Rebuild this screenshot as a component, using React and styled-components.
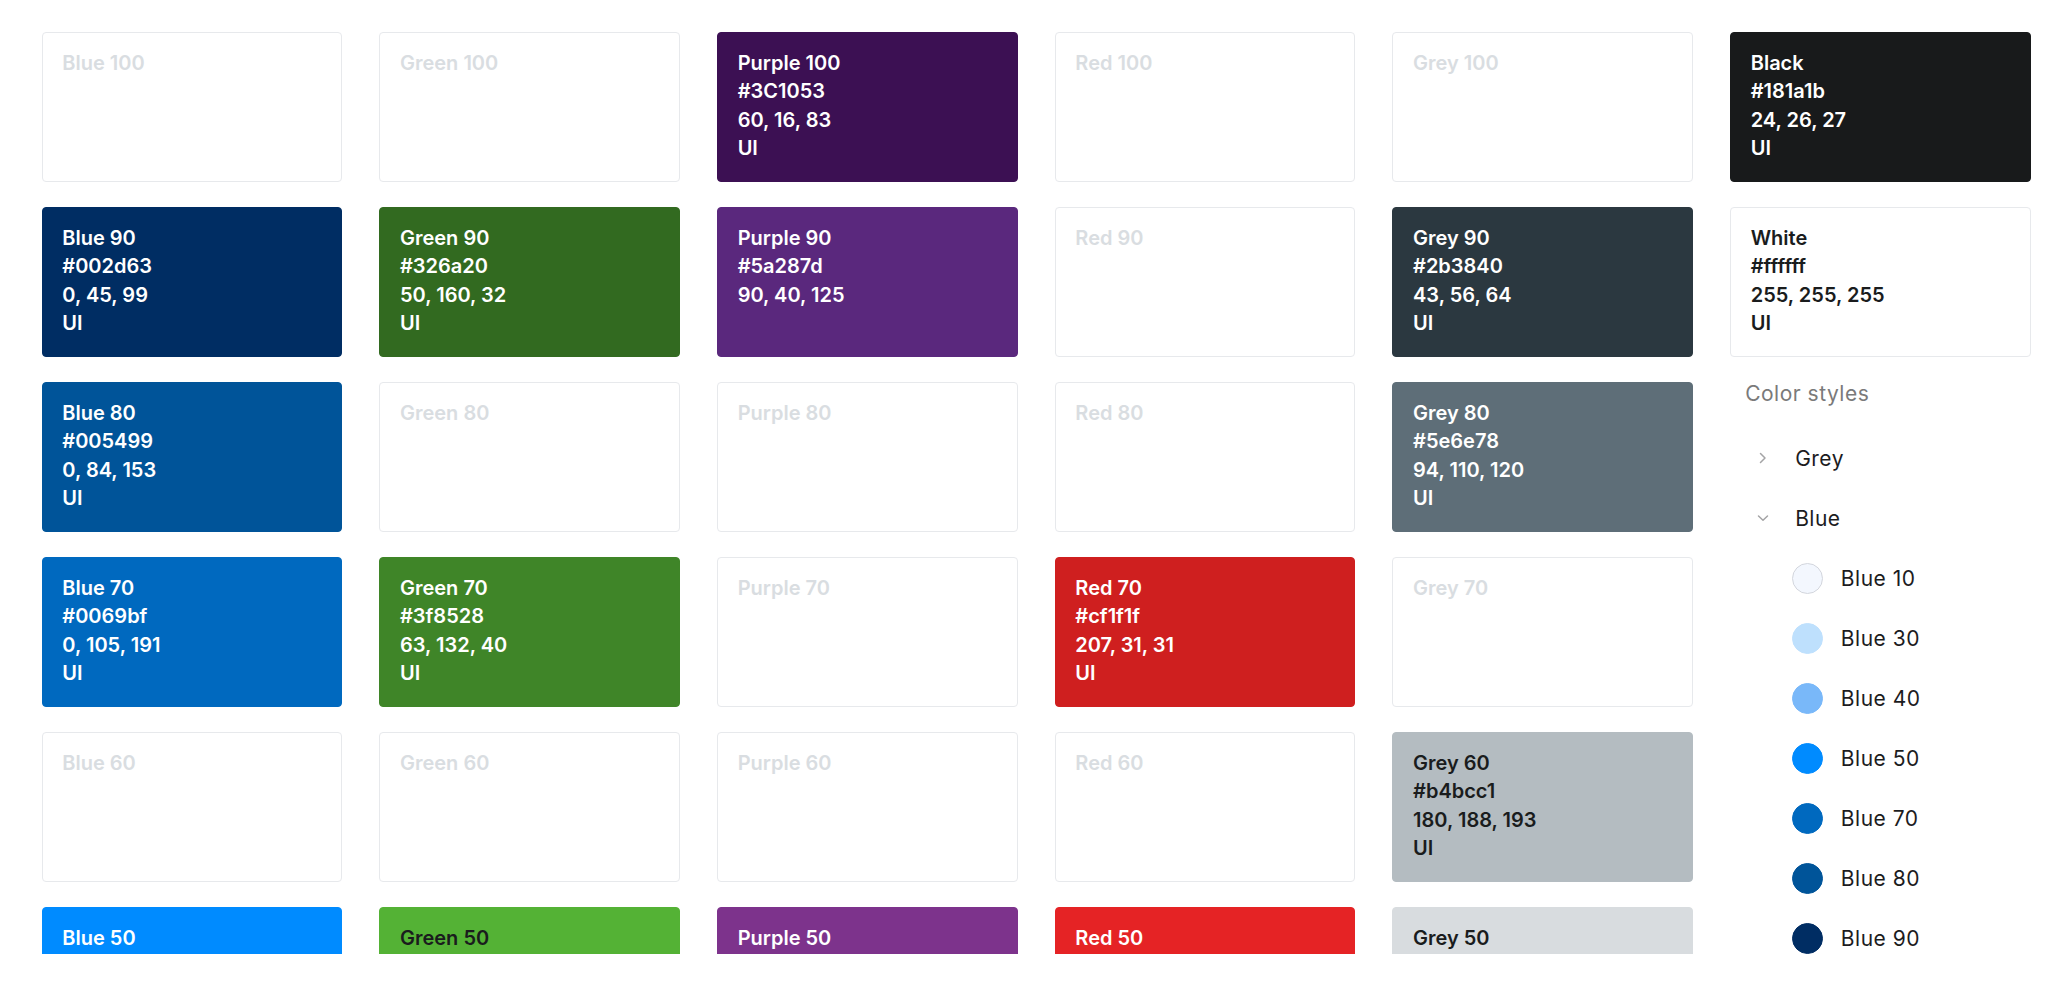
import styled, { createGlobalStyle } from 'styled-components'

const GlobalStyle = createGlobalStyle`
  html, body {
    margin: 0;
    padding: 0;
    background: #ffffff;
  }
  * {
    box-sizing: border-box;
  }
`

const Frame = styled.div`
  height: 954px;
  overflow: hidden;
  padding: 31.7px 0 0 41.7px;
  display: flex;
  align-items: flex-start;
  gap: 37.2px;
  font-family: Inter, 'Liberation Sans', sans-serif;
`

const SwatchGrid = styled.div`
  display: grid;
  grid-template-columns: repeat(5, 300.5px);
  grid-auto-rows: 150px;
  column-gap: 37.2px;
  row-gap: 25px;
`

const RightColumn = styled.div`
  width: 300.5px;
  display: flex;
  flex-direction: column;
  gap: 25px;
`

const Card = styled.div`
  height: 150px;
  border-radius: 4px;
  border: 1px solid ${(p) => (p.$bg && !p.$outlined ? p.$bg : '#e7e9ec')};
  background: ${(p) => p.$bg || '#ffffff'};
  color: ${(p) => (p.$empty ? '#d9dde1' : p.$dark ? '#1a1c1d' : '#ffffff')};
  padding: 16.5px 19.6px;
  font-size: 20px;
  font-weight: 600;
  line-height: 28.3px;
`

const Line = styled.div`
  white-space: nowrap;
`

const Sidebar = styled.div`
  display: flex;
  flex-direction: column;
`

const SidebarTitle = styled.div`
  padding-left: 15px;
  font-size: 21px;
  line-height: 24px;
  letter-spacing: 0.5px;
  color: #7a7a7a;
  margin-bottom: 22.8px;
`

const Row = styled.div`
  height: 60px;
  display: flex;
  align-items: center;
  padding-left: ${(p) => (p.$indent ? '62px' : '26px')};
  gap: ${(p) => (p.$indent ? '17.7px' : '26px')};
  font-size: 21px;
  letter-spacing: 0.5px;
  color: #1c1c1e;
`

const Caret = styled.span`
  width: 13px;
  height: 13px;
  display: flex;
  align-items: center;
  justify-content: center;
`

const Dot = styled.span`
  width: 31px;
  height: 31px;
  border-radius: 50%;
  flex: none;
  background: ${(p) => p.$color};
  border: 1px solid ${(p) => (p.$ring ? '#d3d6dd' : p.$color)};
`

const empty = (name) => ({ name, empty: true })
const fill = (name, hex, rgb, ui, dark) => ({ name, hex, rgb, ui, dark })

const swatches = [
  empty('Blue 100'),
  empty('Green 100'),
  fill('Purple 100', '#3C1053', '60, 16, 83', true),
  empty('Red 100'),
  empty('Grey 100'),

  fill('Blue 90', '#002d63', '0, 45, 99', true),
  fill('Green 90', '#326a20', '50, 160, 32', true),
  fill('Purple 90', '#5a287d', '90, 40, 125', false),
  empty('Red 90'),
  fill('Grey 90', '#2b3840', '43, 56, 64', true),

  fill('Blue 80', '#005499', '0, 84, 153', true),
  empty('Green 80'),
  empty('Purple 80'),
  empty('Red 80'),
  fill('Grey 80', '#5e6e78', '94, 110, 120', true),

  fill('Blue 70', '#0069bf', '0, 105, 191', true),
  fill('Green 70', '#3f8528', '63, 132, 40', true),
  empty('Purple 70'),
  fill('Red 70', '#cf1f1f', '207, 31, 31', true),
  empty('Grey 70'),

  empty('Blue 60'),
  empty('Green 60'),
  empty('Purple 60'),
  empty('Red 60'),
  fill('Grey 60', '#b4bcc1', '180, 188, 193', true, true),

  fill('Blue 50', '#008bff', '0, 139, 255', true),
  fill('Green 50', '#54b235', '84, 178, 53', true, true),
  fill('Purple 50', '#7d338c', '125, 51, 140', true),
  fill('Red 50', '#e52325', '229, 35, 37', true),
  fill('Grey 50', '#d8dcdf', '216, 220, 223', true, true),
]

const blues = [
  { name: 'Blue 10', color: '#f3f7fe', ring: true },
  { name: 'Blue 30', color: '#bee0fd' },
  { name: 'Blue 40', color: '#79b8f9' },
  { name: 'Blue 50', color: '#008bff' },
  { name: 'Blue 70', color: '#0069bf' },
  { name: 'Blue 80', color: '#005499' },
  { name: 'Blue 90', color: '#002d63' },
]

function Swatch({ item, outlined }) {
  if (item.empty) {
    return (
      <Card $empty>
        <Line>{item.name}</Line>
      </Card>
    )
  }
  return (
    <Card $bg={item.hex} $dark={item.dark} $outlined={outlined}>
      <Line>{item.name}</Line>
      <Line>{item.hex}</Line>
      <Line>{item.rgb}</Line>
      {item.ui && <Line>UI</Line>}
    </Card>
  )
}

function ChevronRight() {
  return (
    <svg width='8' height='12' viewBox='0 0 8 12' fill='none'>
      <polyline points='1.5,1.5 6,6 1.5,10.5' stroke='#a4a4a6' strokeWidth='1.5' strokeLinecap='round' strokeLinejoin='round' />
    </svg>
  )
}

function ChevronDown() {
  return (
    <svg width='12' height='8' viewBox='0 0 12 8' fill='none'>
      <polyline points='1.5,2 6,6.2 10.5,2' stroke='#a4a4a6' strokeWidth='1.5' strokeLinecap='round' strokeLinejoin='round' />
    </svg>
  )
}

function ColorStyles() {
  return (
    <Sidebar>
      <SidebarTitle>Color styles</SidebarTitle>
      <Row>
        <Caret>
          <ChevronRight />
        </Caret>
        Grey
      </Row>
      <Row>
        <Caret>
          <ChevronDown />
        </Caret>
        Blue
      </Row>
      {blues.map((b) => (
        <Row key={b.name} $indent>
          <Dot $color={b.color} $ring={b.ring} />
          {b.name}
        </Row>
      ))}
    </Sidebar>
  )
}

export default function App() {
  return (
    <>
      <GlobalStyle />
      <Frame>
        <SwatchGrid>
          {swatches.map((s) => (
            <Swatch key={s.name} item={s} />
          ))}
        </SwatchGrid>
        <RightColumn>
          <Swatch item={fill('Black', '#181a1b', '24, 26, 27', true)} />
          <Swatch item={fill('White', '#ffffff', '255, 255, 255', true, true)} outlined />
          <ColorStyles />
        </RightColumn>
      </Frame>
    </>
  )
}
